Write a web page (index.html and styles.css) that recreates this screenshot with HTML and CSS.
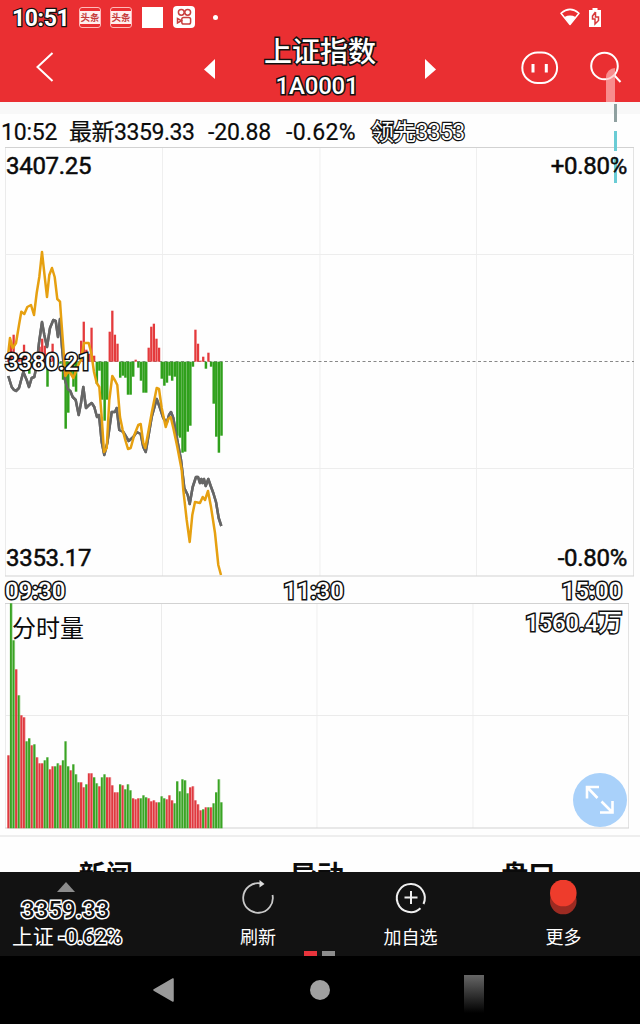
FILE: index.html
```
<!DOCTYPE html>
<html lang="zh-CN">

<head>
    <meta charset="UTF-8">
    <meta name="viewport" content="width=device-width, initial-scale=1.0">
    <title>上证指数</title>
    <link rel="stylesheet" href="styles.css">
</head>

<body>
    <div class="phone">
        <div class="header">
            <div class="status">
                <span class="clock">10:51</span>
                <i class="news">头条</i>
                <i class="news">头条</i>
                <i class="square"></i>
                <svg class="video" width="22" height="22" viewBox="0 0 22 22">
                    <rect width="22" height="22" rx="4" fill="#fff" />
                    <g fill="none" stroke="#c9403f" stroke-width="1.5">
                        <circle cx="8.3" cy="6.3" r="2.9" />
                        <circle cx="14.7" cy="6.3" r="2.9" />
                        <rect x="8.8" y="11.4" width="8.8" height="6.6" rx="1.8" />
                        <path d="M8.5 14.7 4.5 12.6v4.4z" />
                    </g>
                </svg>
                <i class="dot"></i>
                <svg class="wifi" width="20" height="18" viewBox="0 0 20 18">
                    <path d="M1 5.2Q10-2.5 19 5.2L10 16.5Z" fill="none" stroke="#fff" stroke-width="1.5" stroke-linejoin="round" />
                    <path d="M4.5 9Q10 6.2 15.5 9L10 16.5Z" fill="#fff" />
                </svg>
                <svg class="battery" width="12" height="19" viewBox="0 0 12 19">
                    <path d="M3.5 0h5v2H12v17H0V2h3.5z" fill="#fff" />
                    <path d="M6.5 4 3.5 8v3H6v5l3.500-3.500V9H6.500V4" fill="none" stroke="#d8383a" stroke-width="1.500" />
                </svg>
            </div>
            <div class="title-bar">
                <svg class="back" width="18" height="30" viewBox="0 0 18 30">
                    <path d="M16.5 1 1.5 15l15 14" fill="none" stroke="#fff" stroke-width="2" />
                </svg>
                <div class="switch">
                    <svg width="12" height="20" viewBox="0 0 12 20"><path d="M11 0v20L0 10.5z" fill="#fff" /></svg>
                    <div class="stock">
                        <h1>上证指数</h1>
                        <span>1A0001</span>
                    </div>
                    <svg width="12" height="20" viewBox="0 0 12 20"><path d="M1 0v20l11-9.5z" fill="#fff" /></svg>
                </div>
                <div class="actions">
                    <svg width="38" height="34" viewBox="0 0 38 34">
                        <rect x="1.3" y="1.5" width="34.8" height="30.5" rx="15.3" fill="none" stroke="#fff" stroke-width="2" />
                        <path d="M12 13v8.500M25.300 13v8.500" stroke="#fff" stroke-width="3" />
                    </svg>
                    <svg width="32" height="34" viewBox="0 0 32 34">
                        <circle cx="14.5" cy="15" r="13.3" fill="none" stroke="#fff" stroke-width="2" />
                        <path d="M24 24l6.500 7" stroke="#fff" stroke-width="2" />
                    </svg>
                </div>
            </div>
        </div>
        <div class="quote">
            <span>10:52</span>
            <span>最新3359.33</span>
            <span>-20.88</span>
            <span>-0.62%</span>
            <span class="outline">领先3353</span>
        </div>
        <div class="price">
            <svg id="price" width="640" height="430" viewBox="0 147 640 430"></svg>
            <div class="labels">
                <span>3407.25</span><span>+0.80%</span>
                <span class="outline base">3380.21</span><span></span>
                <span>3353.17</span><span>-0.80%</span>
            </div>
        </div>
        <div class="time outline">
            <span>09:30</span><span>11:30</span><span>15:00</span>
        </div>
        <div class="volume">
            <svg id="volume" width="640" height="234" viewBox="0 603 640 234"></svg>
            <div class="labels">
                <span>分时量</span><span class="outline">1560.4万</span>
            </div>
            <div class="expand">
                <svg width="54" height="54" viewBox="0 0 54 54">
                    <path d="M24.5 25 14 14M14 25.5V14h12M28.500 28.500l11 11M39.500 28v11.500H27" fill="none" stroke="#fff" stroke-width="2.600" />
                </svg>
            </div>
        </div>
        <div class="tabs">
            <span>新闻</span><span>异动</span><span>盘口</span>
        </div>
        <div class="toolbar">
            <div class="index">
                <svg width="18" height="10" viewBox="0 0 18 10"><path d="M9 0l9 10H0z" fill="#8c8c8c" /></svg>
                <b>3359.33</b>
                <p>上证 <b>-0.62%</b></p>
            </div>
            <div class="tool">
                <svg width="36" height="36" viewBox="0 0 36 36">
                    <path d="M21 3.5A14.8 14.8 0 1 0 32.5 15" fill="none" stroke="#c9c9c9" stroke-width="1.8" />
                    <path d="M19.5 0l5 4-5 3.5z" fill="#ddd" />
                </svg>
                <span>刷新</span>
            </div>
            <div class="tool">
                <svg width="36" height="36" viewBox="0 0 36 36">
                    <path d="M30.5 24A14 14 0 1 0 27.5 28.2" fill="none" stroke="#eee" stroke-width="2" />
                    <path d="M11.5 17.5h13M18 11v13" stroke="#eee" stroke-width="2" />
                </svg>
                <span>加自选</span>
            </div>
            <div class="tool">
                <svg width="36" height="36" viewBox="0 0 36 36">
                    <circle cx="17.3" cy="21" r="13.3" fill="#9c2b22" />
                    <circle cx="17.3" cy="13" r="13.3" fill="#ee3c2c" />
                </svg>
                <span>更多</span>
            </div>
            <div class="pager"><i class="on"></i><i></i></div>
        </div>
        <div class="nav">
            <svg width="22" height="24" viewBox="0 0 22 24"><path d="M20 1v22L1 12z" fill="#9a9a9a" stroke="#9a9a9a" stroke-width="1.5" stroke-linejoin="round" /></svg>
            <i class="home"></i>
            <i class="recent"></i>
        </div>
        <div class="streak"><i></i><i></i><i></i><i></i></div>
    </div>
    <script>
        var priceDom = document.querySelector('#price')
        var volumeDom = document.querySelector('#volume')
        var RED = '#e43a3c', GREEN = '#30a01c'

        // 每分钟一根柱子
        function barX(i) {
            return 7.3 + i * 2.597
        }
        function line(x1, y1, x2, y2, color, extra) {
            return '<path d="M' + x1 + ' ' + y1 + 'L' + x2 + ' ' + y2 + '" stroke="' + color + '" ' + (extra || '') + '/>'
        }
        function bar(x, y, h, color, w) {
            return '<rect x="' + x + '" y="' + y + '" width="' + w + '" height="' + h + '" fill="' + color + '"/>'
        }
        // 走势线
        function trend(points, color) {
            return '<polyline points="' + points + '" fill="none" stroke="' + color + '" stroke-width="2.5" stroke-linejoin="round"/>'
        }

        // 红绿柱,正数向上,负数向下
        var force = [8, 20, 27, 9, 6, 3, 17, 10, -12, -5, -3, 3, 15, 23, 16, -25, 3, 18, 4, 2, -2, -18, -67, -51, -12,
            -25, -30, -3, 21, 40, 12, 8, 34, 6, -22, -9, -38, -59, -38, 30, 51, 27, 18, -16, -14, -16, -33, -33, -15, 2,
            -6, -19, -31, -31, 14, 35, 38, 23, 14, -17, -24, -21, -14, -19, -15, -74, -76, -91, -90, -70, -64, -5, 32,
            18, 1, 5, -7, 9, -5, -42, -75, -91, -74]

        var avg = '8.3,376 11.7,387 14,390 16,391 19,388 23.3,372 26.7,380 29,387 31.7,378 34.3,377 36.7,365 39,343 42,322 44.3,335 47,347 50,328 53.3,320 55.7,321 58,337 60,319 62,347 65,380 67.7,389 70.3,391 72.7,397 75.7,400 78.7,415 81,403 83.3,387 86,408 89,405 91.7,403 94.3,407 97,417 99,415 101.7,442 104.3,455 107.3,443 111.7,412 115,412 116.7,408 119.3,430 123.3,432 128.7,441 133.3,437 136.7,432 140.7,434 143.3,447 145.7,452 148.3,437 151.7,417 156.7,399 160,408 163.3,418 166.7,423 169,415 171,412 173.3,418 176.7,437 181,460 184.3,488 187.7,495 189.7,504 192.7,487 196,477 198,477 200,483 201.3,479 202.7,483 204,479 205.7,486 208.3,479 210.7,486 213.3,493 216,502 218.7,518 221.3,526'
        var now = '8.3,353 10,338 12.7,348 16,343 19,325 21.3,311.7 24.3,314 27.3,307 31,305 34,315 36.7,293 39.3,277 42,252 44.3,273 47,297 49.3,275 52,268 54.7,277 57.3,299 60,301.7 61.3,320 63.3,347 65.3,376 67.7,372 70.3,373 73.3,378 78.3,365 81,360 84,343 88.7,343 91.3,353 94,372 96.7,383 99.3,387 101.7,417 104,452 106.7,448 109.3,400 112.3,376 115.3,381 117.3,385 120,417 122.7,430 125.3,440 128,449 130.7,448 134.3,435 138.3,425 140.7,424 143.3,443 145.3,448 148.3,432 151.7,413 156.7,388 159,389 161.7,408 165.7,427 168.3,419 170.7,417 173.3,428 177.3,447 181.7,470 183.3,490 186.7,520 189.7,542 192.3,515 195,502 200,503 202.7,497 205,500 208,491 211,507 215,533 218.3,565 221,575'

        var html = ''
        html += line(5.5, 148, 5.5, 576, '#ebebeb')
        html += line(162.5, 148, 162.5, 576, '#efefef')
        html += line(320, 148, 320, 576, '#efefef')
        html += line(476.5, 148, 476.5, 576, '#efefef')
        html += line(633.5, 148, 633.5, 576, '#e3e3e3')
        html += line(5, 254.5, 634, 254.5, '#ededed')
        html += line(5, 468.5, 634, 468.5, '#ededed')
        html += line(5, 147.5, 634, 147.5, '#d2d2d2')
        html += line(5, 576, 634, 576, '#d2d2d2')
        html += line(5, 361.5, 634, 361.5, '#888', 'stroke-dasharray="3 2.5"')
        html += trend(avg, '#666')
        force.forEach(function (v, i) {
            var up = v > 0
            html += bar(barX(i), up ? 361.7 - v : 361.7, Math.abs(v), up ? RED : GREEN, up ? 2.3 : 2.5)
        })
        // 柱子下方的线重新盖在上面
        html += trend(avg, '#666')
        html += trend(now, '#e6a010')
        priceDom.innerHTML = html

        // 成交量
        var vol = [73, 225, 188, 159, 133, 113, 111, 87, 90, 83, 84, 71, 65, 65, 68, 71, 59, 62, 62, 65, 63, 68, 87, 62, 58,
            64, 54, 46, 46, 41, 44, 55, 55, 51, 45, 42, 51, 54, 51, 51, 43, 36, 36, 44, 43, 39, 44, 38, 30, 29, 30, 30,
            33, 31, 30, 27, 28, 26, 26, 32, 30, 29, 33, 28, 25, 47, 37, 49, 48, 35, 41, 42, 28, 24, 18, 19, 21, 21, 21,
            25, 36, 49, 26]
        var volColor = 'rggrgrrggrgrrrggrrggrgggrgggrrgrrggrggrrrrrgrgggrrrgggrrrrgggrrrgggggg' + 'rrrrrgrgrgggg'
        html = ''
        html += line(5.5, 603, 5.5, 828, '#ebebeb')
        html += line(161.5, 603, 161.5, 828, '#ebebeb')
        html += line(317, 603, 317, 828, '#efefef')
        html += line(473, 603, 473, 828, '#efefef')
        html += line(628.5, 603, 628.5, 828, '#e3e3e3')
        html += line(5, 715.5, 629, 715.5, '#ebebeb')
        html += line(5, 603.5, 629, 603.5, '#d2d2d2')
        html += line(5, 828, 629, 828, '#d2d2d2')
        html += line(0, 836, 640, 836, '#dedede')
        vol.forEach(function (v, i) {
            var color = volColor[i] === 'r' ? '#e0393f' : '#3aa424'
            html += bar(barX(i), 828.3 - v, v, color, 2)
            html += '<rect x="' + (barX(i) + 2) + '" y="' + (828.3 - v) + '" width=".6" height="' + v + '" fill="' + color + '" opacity=".55"/>'
        })
        volumeDom.innerHTML = html
    </script>
</body>

</html>
```
FILE: styles.css
```
* {
    box-sizing: border-box;
}

body {
    margin: 0;
    font-family: Roboto, "Noto Sans CJK SC", sans-serif;
    color: #0b0b0b;
    background-color: #fefefe;
}

svg,
i {
    display: block;
    flex: none;
}

.phone {
    width: 640px;
    height: 1024px;
    position: relative;
    overflow: hidden;
    display: flex;
    flex-direction: column;
}

.outline {
    color: #fff;
    -webkit-text-stroke: 3px #111;
    paint-order: stroke fill;
}

/* 顶部 */
.header {
    height: 102px;
    flex: none;
    background-color: #ea2f32;
    color: #fff;
}

.status {
    height: 34px;
    display: flex;
    align-items: center;
    padding-left: 12px;
}

.clock {
    width: 67px;
    font-size: 23px;
    font-weight: 700;
    line-height: 34px;
    padding-top: 3px;
    letter-spacing: -.4px;
    -webkit-text-stroke: 2.5px #111;
    paint-order: stroke fill;
}

.news {
    width: 22px;
    height: 21px;
    margin-right: 9px;
    border: 1px solid #fbb;
    border-radius: 3px;
    background: linear-gradient(#ea2f32 3px, #fff0ee 3px, #fff0ee 16px, #ea2f32 16px);
    color: #c5393a;
    font: 700 9.5px/18px "Noto Sans CJK SC", sans-serif;
    text-align: center;
    white-space: nowrap;
}

.square {
    width: 21px;
    height: 21px;
    background-color: #fff;
    margin: 0 10px 0 1px;
}

.dot {
    width: 5px;
    height: 5px;
    border-radius: 50%;
    background-color: #fff;
    margin-left: 18px;
}

.wifi {
    margin-left: 342px;
}

.battery {
    margin-left: 9px;
}

.title-bar {
    height: 68px;
    display: grid;
    grid-template-columns: 204px 232px 204px;
}

.back {
    margin: 18px 0 0 36px;
}

.switch {
    display: flex;
    justify-content: space-between;
}

.switch>svg {
    margin-top: 25px;
}

.stock {
    padding-top: 1px;
    text-align: center;
    -webkit-text-stroke: 3px #111;
    paint-order: stroke fill;
}

.stock h1 {
    margin: 0;
    font-size: 28px;
    font-weight: 500;
    line-height: 36px;
}

.stock span {
    display: block;
    font-size: 24px;
    font-weight: 500;
    line-height: 30px;
    letter-spacing: -.2px;
    margin-left: -6px;
}

.actions {
    display: flex;
    gap: 31px;
    padding: 17px 0 0 85px;
}

/* 行情 */
.quote {
    height: 45px;
    flex: none;
    display: grid;
    grid-template-columns: 68px 139px 78px 85px auto;
    padding-left: 1px;
    border-top: 12px solid #f8f8f8;
    font-size: 23px;
    line-height: 38px;
    letter-spacing: -.2px;
    white-space: nowrap;
    -webkit-text-stroke: .2px #0b0b0b;
}

.quote span:nth-child(2) {
    letter-spacing: -.45px;
}

.quote span:nth-child(4) {
    letter-spacing: .3px;
}

.quote .outline {
    letter-spacing: -.7px;
    -webkit-text-stroke: 2.5px #111;
}

.price {
    height: 430px;
    flex: none;
    display: grid;
}

.price>*,
.volume>* {
    grid-area: 1 / 1;
}

.price .labels {
    z-index: 1;
    display: grid;
    grid-template-columns: 1fr 1fr;
    align-content: space-between;
    padding: 3px 13px 3px 6px;
    font-size: 24px;
    line-height: 32px;
    letter-spacing: -.3px;
    -webkit-text-stroke: .5px #0b0b0b;
}

.labels span:nth-child(even) {
    text-align: right;
}

.price .base {
    margin: -1px 0 0 -1px;
    font-weight: 500;
    -webkit-text-stroke: 3px #111;
}

.time {
    height: 26px;
    flex: none;
    display: grid;
    grid-template-columns: 1fr 1fr 1fr;
    padding: 0 18px 0 5px;
    font-size: 24px;
    font-weight: 500;
    line-height: 28px;
    letter-spacing: -.1px;
}

.time span:nth-child(2) {
    text-align: center;
}

.time span:nth-child(3) {
    text-align: right;
}

/* 成交量 */
.volume {
    height: 234px;
    flex: none;
    display: grid;
}

.volume .labels {
    display: flex;
    justify-content: space-between;
    padding: 9px 18px 0 12px;
    font-size: 24px;
    line-height: 34px;
}

.volume .outline {
    line-height: 22px;
    letter-spacing: -.3px;
    font-weight: 500;
}

.expand {
    width: 54px;
    height: 54px;
    margin: 170px 0 0 573px;
    border-radius: 50%;
    background-color: #a9d1fa;
}

.tabs {
    height: 35px;
    flex: none;
    display: grid;
    grid-template-columns: 1fr 1fr 1fr;
    padding: 21px 6px 0 0;
    overflow: hidden;
    text-align: center;
    font-size: 27px;
    font-weight: 700;
    line-height: 36px;
}

/* 底部工具栏 */
.toolbar {
    height: 84px;
    flex: none;
    position: relative;
    display: grid;
    grid-template-columns: 182px 152px 153px 153px;
    background-color: #121212;
    color: #fff;
}

.index {
    padding-left: 12px;
}

.index svg {
    margin: 10px 0 0 45px;
}

.index b {
    color: #121212;
    font-weight: 500;
    -webkit-text-stroke: 3px #fff;
    paint-order: stroke fill;
}

.index>b {
    display: block;
    padding: 3px 0 0 9px;
    font-size: 24px;
    line-height: 31px;
}

.index p {
    margin: 0;
    line-height: 22px;
    white-space: nowrap;
    font-size: 21px;
    letter-spacing: -.2px;
}

.tool {
    display: flex;
    flex-direction: column;
    align-items: center;
    padding-top: 8px;
    font-size: 18px;
    line-height: 43px;
}

.pager {
    position: absolute;
    left: 304px;
    bottom: 0;
    display: flex;
    gap: 5px;
}

.pager i {
    width: 13px;
    height: 5px;
    background-color: #8d8d8d;
}

.pager .on {
    background-color: #e8343c;
}

.nav {
    height: 68px;
    flex: none;
    display: flex;
    align-items: center;
    padding-left: 153px;
    background-color: #000;
}

.home {
    width: 20px;
    height: 20px;
    margin: 0 134px 0 135px;
    border-radius: 50%;
    background-color: #a0a0a0;
}

.recent {
    width: 20px;
    height: 38px;
    margin-top: 8px;
    background: linear-gradient(#666, #000);
}

/* 右上角浮在上面的竖线 */
.streak {
    position: absolute;
    top: 68px;
    left: 606px;
}

.streak i {
    width: 3px;
    height: 20px;
    margin: 0 0 7px 8px;
    background-color: #6accd5;
}

.streak i:nth-child(1) {
    width: 9px;
    height: 34px;
    margin: 0 0 2px;
    border-radius: 9px 0 0 0;
    background-color: rgba(255, 190, 190, .65);
}

.streak i:nth-child(2) {
    height: 18px;
    margin-bottom: 9px;
    background-color: #8fa0a0;
}

.streak i:nth-child(4) {
    height: 25px;
}
```
